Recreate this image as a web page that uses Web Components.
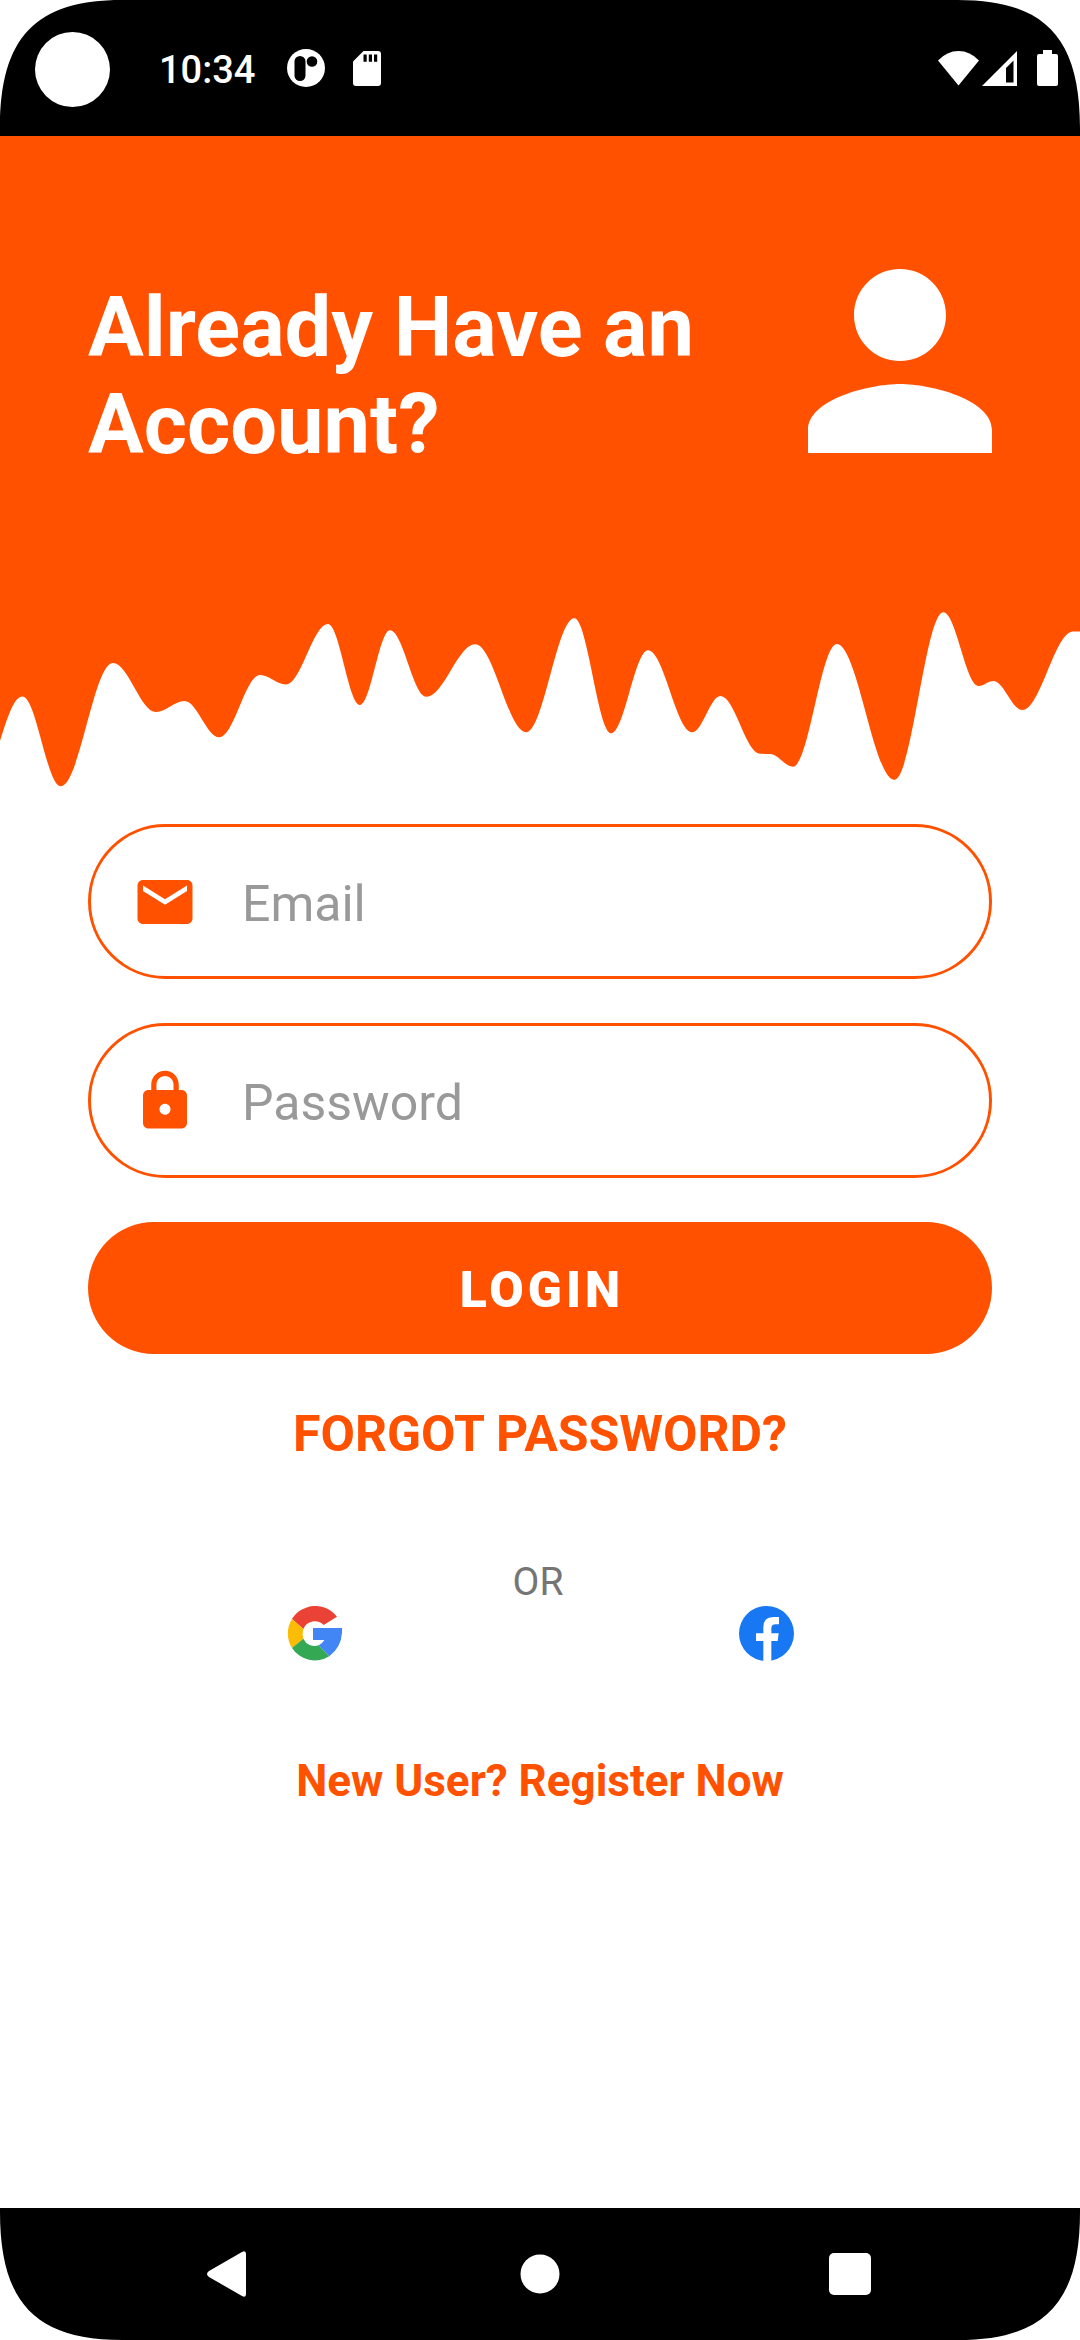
<!DOCTYPE html>
<html lang="en">
<head>
<meta charset="utf-8">
<meta name="viewport" content="width=device-width, initial-scale=1">
<title>Login</title>
<style>
  :root { --accent: #ff5100; --bar: #000; --gutter: 88px; }
  body { margin: 0; background: #fff; font-family: Roboto, "Liberation Sans", sans-serif; }
</style>
</head>
<body>
<login-screen></login-screen>
<script>
const define = (name, markup, setup) => {
  const template = document.createElement('template');
  template.innerHTML = markup;
  customElements.define(name, class extends HTMLElement {
    constructor() {
      super();
      this.attachShadow({ mode: 'open' }).append(template.content.cloneNode(true));
    }
    connectedCallback() {
      if (setup && !this.ready) { this.ready = true; setup(this, this.shadowRoot); }
    }
  });
};

/* Rounded display corner, flipped with the "side" attribute */
define('screen-corner', `
  <style>
    :host { position: absolute; top: 0; left: 0; line-height: 0; }
    :host([side~="right"]) { left: auto; right: 0; transform: scaleX(-1); }
    :host([side~="bottom"]) { top: auto; bottom: 0; transform: scaleY(-1); }
    :host([side~="bottom"][side~="right"]) { transform: scale(-1, -1); }
  </style>
  <svg width="122" height="128" viewBox="0 0 122 128" aria-hidden="true"><path fill="#fff" d="M0 0H122C35 0 0 38 0 128Z"/></svg>
`);

define('status-bar', `
  <style>
    :host { position: relative; display: flex; align-items: center; justify-content: space-between;
            height: 136px; padding: 0 22px 0 35px; box-sizing: border-box; background: var(--bar); color: #fff; }
    div { display: flex; align-items: center; }
    .camera { width: 75px; height: 75px; border-radius: 50%; background: #fff; margin-right: 49px; margin-top: 3px; }
    time { font-size: 38px; line-height: 46px; font-weight: 500; margin: 3px 32px 0 0; }
    svg { display: block; fill: #fff; }
    .app { margin-right: 28px; }
    .signal { margin: 0 20px 0 3px; }
  </style>
  <div>
    <span class="camera"></span>
    <time>10:34</time>
    <svg class="app" width="38" height="38" viewBox="0 0 38 38" aria-hidden="true">
      <circle cx="19" cy="19" r="19"/>
      <rect x="7.500" y="7" width="11" height="25" rx="5.500" fill="#000"/>
      <circle cx="25" cy="12.500" r="5.300" fill="#000"/>
    </svg>
    <svg width="28" height="35" viewBox="0 0 28 35" aria-hidden="true">
      <path d="M10.500 0H25q3 0 3 3V32q0 3-3 3H3q-3 0-3-3V10.500Z"/>
      <path fill="#000" d="M10.500 3.500h3.200v7.300h-3.200zM15.800 3.500H19v7.300h-3.200zM21 3.500h3.200v7.300H21z"/>
    </svg>
  </div>
  <div>
    <svg width="41" height="35" viewBox="0 0 41 35" aria-hidden="true"><path d="M0 9.500Q9 0 20.500 0T41 9.500L20.500 34.500Z"/></svg>
    <svg class="signal" width="35" height="35" viewBox="0 0 35 35" aria-hidden="true">
      <path fill-rule="evenodd" d="M35 0V35H0ZM31.500 9.500 24 17V31.500H31.500Z"/>
    </svg>
    <svg width="21" height="36" viewBox="0 0 21 36" aria-hidden="true"><path d="M6 0H15V4H19q2 0 2 2V34q0 2-2 2H2q-2 0-2-2V6Q0 4 2 4H6Z"/></svg>
  </div>
  <screen-corner></screen-corner>
  <screen-corner side="right"></screen-corner>
`);

/* Dripping edge: a smooth curve through [x, y, slope] points */
define('wave-edge', `
  <style>
    :host { display: block; height: 180px; }
    svg { display: block; width: 100%; height: 100%; }
    path { fill: var(--accent); }
  </style>
  <svg viewBox="0 0 1080 180" preserveAspectRatio="none" aria-hidden="true"><path/></svg>
`, (host, root) => {
  const points = [
    [0, 131, -3.2], [22.5, 86.5], [60.7, 176.3], [112.8, 53], [156, 102], [184.5, 91], [219.3, 127.3],
    [260, 65], [286, 74.5], [328, 14], [360, 95], [390, 20.3], [426.3, 86.8], [475.3, 34.3],
    [526.3, 122.3], [574.3, 8.3], [611.2, 123.3], [648, 40.3], [692.2, 122.3], [720.5, 86],
    [760, 143.7], [770, 144], [793, 156.7], [836.8, 34], [894.4, 169.7], [943.3, 2.3], [978.6, 76],
    [993.4, 71], [1022.3, 100], [1073, 21.4], [1080, 21.4]
  ];
  let d = `M0 0V${points[0][1]}`;
  for (let i = 1; i < points.length; i++) {
    const [x0, y0, s0 = 0] = points[i - 1], [x1, y1, s1 = 0] = points[i];
    const k = (x1 - x0) * 0.36;
    d += `C${x0 + k} ${y0 + s0 * k} ${x1 - k} ${y1 - s1 * k} ${x1} ${y1}`;
  }
  root.querySelector('path').setAttribute('d', d + 'V0Z');
});

define('page-header', `
  <style>
    :host { display: block; }
    .band { display: flex; justify-content: space-between; align-items: flex-start; gap: 44px;
            padding: 133px var(--gutter) 137px; background: var(--accent); color: #fff; }
    h1 { margin: 10px 0 0; flex: 1; font-size: 83px; line-height: 97px; font-weight: 700; }
    svg { display: block; flex: none; fill: #fff; }
  </style>
  <div class="band">
    <h1><slot></slot></h1>
    <svg width="184" height="184" viewBox="4 4 16 16" aria-hidden="true">
      <path d="M12,12c2.21,0 4,-1.79 4,-4s-1.79,-4 -4,-4 -4,1.79 -4,4 1.79,4 4,4zM12,14c-2.67,0 -8,1.34 -8,4v2h16v-2c0,-2.66 -5.33,-4 -8,-4z"/>
    </svg>
  </div>
  <wave-edge></wave-edge>
`);

define('text-field', `
  <style>
    :host { display: block; }
    label { display: flex; align-items: center; gap: 44px; height: 155px; padding: 0 41px; box-sizing: border-box;
            border: 3px solid var(--accent); border-radius: 78px; }
    ::slotted(svg) { display: block; flex: none; width: 66px; height: 66px; fill: var(--accent); }
    input { flex: 1; min-width: 0; border: 0; outline: 0; margin: 0; padding: 4px 0 0; background: none;
            font: 400 50px/60px Roboto, "Liberation Sans", sans-serif; color: #222; }
    input::placeholder { color: #999; opacity: 1; }
  </style>
  <label><slot></slot><input></label>
`, (host, root) => {
  const input = root.querySelector('input');
  input.type = host.getAttribute('type');
  input.placeholder = host.getAttribute('label');
  input.setAttribute('aria-label', host.getAttribute('label'));
});

define('pill-button', `
  <style>
    :host { display: block; }
    button { display: block; width: 100%; height: 132px; border: 0; border-radius: 66px; padding: 3px 0 0 4px;
             background: var(--accent); color: #fff; cursor: pointer;
             font: 900 50px/60px Roboto, "Liberation Sans", sans-serif; letter-spacing: 4px; }
  </style>
  <button type="button"><slot></slot></button>
`);

define('text-link', `
  <style>
    :host { display: block; text-align: center; font-size: 44px; line-height: 52px; }
    :host([size="large"]) { font-size: 50px; line-height: 60px; }
    a { color: var(--accent); font-weight: 700; text-decoration: none; }
  </style>
  <a href="#"><slot></slot></a>
`);

define('social-login', `
  <style>
    :host { display: block; }
    p { margin: 0; padding-right: 4px; text-align: center; font-size: 39px; line-height: 46px; color: #757575; }
    div { display: flex; margin-top: 1px; }
    span { flex: 1; display: flex; justify-content: center; }
    button { display: block; border: 0; padding: 0; background: none; cursor: pointer; }
    svg { display: block; }
  </style>
  <p>OR</p>
  <div>
    <span><button type="button" aria-label="Google">
      <svg width="55" height="55" viewBox="18 18 165 165">
        <path fill="#ea4335" d="M33 57A82 82 0 0 1 168 50L128 75A37 37 0 0 0 67 87Z"/>
        <path fill="#fbbc05" d="M33 57 67 87Q63 101 67 116L33 144A82 82 0 0 1 33 57Z"/>
        <path fill="#34a853" d="M33 144 67 116A37 37 0 0 0 113 136L145 169A82 82 0 0 1 33 144Z"/>
        <path fill="#4285f4" d="M96 84H183Q186 137 145 169L113 136Q124 131 130 120H96Z"/>
      </svg>
    </button></span>
    <span><button type="button" aria-label="Facebook">
      <svg width="55" height="55" viewBox="24 18 165 165">
        <circle cx="106.500" cy="100.500" r="82.500" fill="#1877f2"/>
        <path fill="#fff" d="M97 184V123H75V100H97V82Q97 51 127 51H144V73H134Q121 73 121 85V100H143L140 123H121V184Z"/>
      </svg>
    </button></span>
  </div>
`);

define('nav-bar', `
  <style>
    :host { position: relative; display: flex; align-items: center;
            height: 132px; box-sizing: border-box; background: var(--bar); }
    button { display: flex; align-items: center; justify-content: center; width: 66px; height: 66px;
             border: 0; padding: 0; background: none; }
    nav { display: flex; flex: 1; justify-content: center; gap: 244px; }
    svg { display: block; fill: #fff; }
  </style>
  <nav>
    <button type="button" aria-label="Back"><svg width="48" height="48" viewBox="0 0 48 48"><path d="M3 21 36 2Q40 0 40 4V44Q40 48 36 46L3 27Q-1 24 3 21Z"/></svg></button>
    <button type="button" aria-label="Home"><svg width="40" height="40" viewBox="0 0 40 40"><circle cx="20" cy="20" r="19.500"/></svg></button>
    <button type="button" aria-label="Recent apps"><svg width="42" height="42" viewBox="0 0 42 42"><rect width="42" height="42" rx="5"/></svg></button>
  </nav>
  <screen-corner side="bottom"></screen-corner>
  <screen-corner side="bottom right"></screen-corner>
`);

define('login-screen', `
  <style>
    :host { display: flex; flex-direction: column; min-height: 100vh; }
    main { flex: 1; }
    form { display: flex; flex-direction: column; padding: 34px var(--gutter) 0; }
    text-field { margin-bottom: 44px; }
    .forgot { margin-top: 50px; }
    social-login { margin-top: 95px; }
    .register { margin-top: 94px; }
  </style>
  <status-bar></status-bar>
  <main>
    <page-header>Already Have an Account?</page-header>
    <form>
      <text-field type="email" label="Email">
        <svg viewBox="0 0 24 24" aria-hidden="true"><path d="M20,4L4,4c-1.1,0 -1.99,0.9 -1.99,2L2,18c0,1.1 0.9,2 2,2h16c1.1,0 2,-0.9 2,-2L22,6c0,-1.1 -0.9,-2 -2,-2zM20,8l-8,5 -8,-5L4,6l8,5 8,-5v2z"/></svg>
      </text-field>
      <text-field type="password" label="Password">
        <svg viewBox="0 0 24 24" aria-hidden="true"><path d="M18,8h-1L17,6c0,-2.76 -2.24,-5 -5,-5S7,3.24 7,6v2L6,8c-1.1,0 -2,0.9 -2,2v10c0,1.1 0.9,2 2,2h12c1.1,0 2,-0.9 2,-2L20,10c0,-1.1 -0.9,-2 -2,-2zM12,17c-1.1,0 -2,-0.9 -2,-2s0.9,-2 2,-2 2,0.9 2,2 -0.9,2 -2,2zM15.100,8L8.900,8L8.900,6c0,-1.710 1.390,-3.100 3.100,-3.100 1.710,0 3.100,1.390 3.100,3.100v2z"/></svg>
      </text-field>
      <pill-button>LOGIN</pill-button>
      <text-link class="forgot" size="large">FORGOT PASSWORD?</text-link>
      <social-login></social-login>
      <text-link class="register">New User? Register Now</text-link>
    </form>
  </main>
  <nav-bar></nav-bar>
`);
</script>
</body>
</html>
